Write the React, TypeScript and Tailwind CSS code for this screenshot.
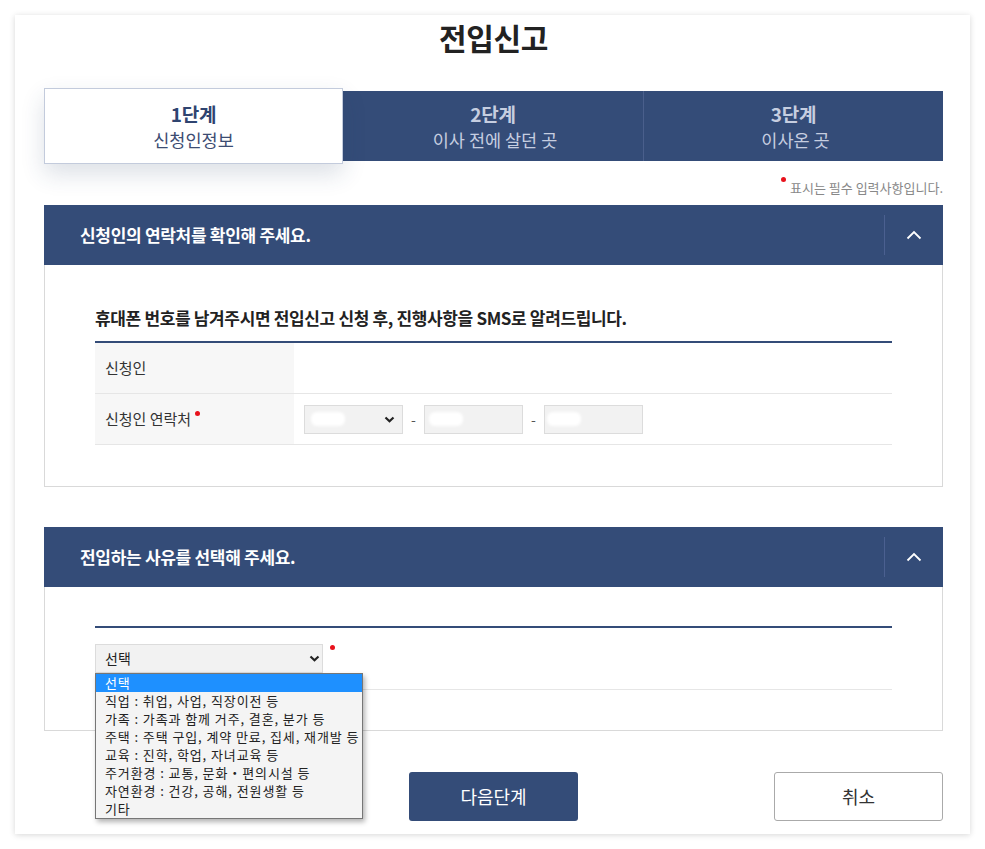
import React from 'react';

const FONT = '"Noto Sans CJK KR", "Noto Sans", sans-serif';

const steps = [
	{ no: '1단계', label: '신청인정보' },
	{ no: '2단계', label: '이사 전에 살던 곳' },
	{ no: '3단계', label: '이사온 곳' },
];

const reasons = [
	'선택',
	'직업 : 취업, 사업, 직장이전 등',
	'가족 : 가족과 함께 거주, 결혼, 분가 등',
	'주택 : 주택 구입, 계약 만료, 집세, 재개발 등',
	'교육 : 진학, 학업, 자녀교육 등',
	'주거환경 : 교통, 문화・편의시설 등',
	'자연환경 : 건강, 공해, 전원생활 등',
	'기타',
];

function RedDot() {
	return <span className="inline-block w-[5px] h-[5px] rounded-full bg-[#e8121c] align-top" />;
}

function ChevronDown() {
	return (
		<svg width="11" height="7" viewBox="0 0 11 7" fill="none">
			<polyline points="1.5,1.5 5.5,5.2 9.5,1.5" stroke="#222" strokeWidth="2.2" />
		</svg>
	);
}

function Blob({ w }: { w: number }) {
	return <span className="block h-[14px] rounded-[6px] bg-white blur-[1.5px]" style={{ width: w }} />;
}

function SectionHeader({ title }: { title: string }) {
	return (
		<div className="flex h-[60px] items-center bg-[#344c78]">
			<div className="flex-1 pl-[36px] text-[17px] font-bold tracking-[-0.3px] text-white">{title}</div>
			<div className="h-[40px] w-px bg-[#4b6090]" />
			<div className="flex w-[58px] items-center justify-center">
				<svg width="16" height="10" viewBox="0 0 16 10" fill="none">
					<polyline points="1.5,8.5 8,2 14.5,8.5" stroke="#fff" strokeWidth="1.8" />
				</svg>
			</div>
		</div>
	);
}

export default function App() {
	return (
		<div className="min-h-screen bg-white pt-[15px] pl-[15px]" style={{ fontFamily: FONT }}>
			<div className="w-[955px] bg-white px-[29px] pb-[13px] pr-[27px] shadow-[0_1px_6px_rgba(0,0,0,0.16)]">
				<h1 className="h-[44px] text-center text-[30px] font-bold leading-[44px] tracking-[-0.4px] text-[#222]">
					전입신고
				</h1>

				{/* 단계 */}
				<div className="mt-[32px] flex h-[70px] bg-[#344c78]">
					{steps.map((s, i) =>
						i === 0 ? (
							<div
								key={s.no}
								className="relative z-10 -my-[3px] flex w-[299px] flex-col items-center justify-center border border-[#c3cbdc] bg-white shadow-[0_10px_22px_rgba(40,60,100,0.16)]"
							>
								<div className="text-[19px] font-bold leading-[27px] tracking-[-0.2px] text-[#2f4470]">{s.no}</div>
								<div className="text-[17.5px] leading-[25px] text-[#3c4c72]">{s.label}</div>
							</div>
						) : (
							<div
								key={s.no}
								className={`flex w-[300px] flex-col items-center justify-center ${i === 2 ? 'border-l border-[#4a5f8c]' : ''}`}
							>
								<div className="text-[19px] font-bold leading-[27px] tracking-[-0.2px] text-[#c6cee0]">{s.no}</div>
								<div className="pl-[4px] text-[17.5px] leading-[25px] text-[#c6cee0]">{s.label}</div>
							</div>
						),
					)}
				</div>

				<div className="flex h-[44px] items-start justify-end pt-[19px] text-[13px] leading-[16px] text-[#888]">
					<span className="mr-[4px] mt-[-3px] inline-block h-[5px] w-[5px] rounded-full bg-[#e8121c]" />
					<span>표시는 필수 입력사항입니다.</span>
				</div>

				{/* 신청인 연락처 */}
				<SectionHeader title="신청인의 연락처를 확인해 주세요." />
				<div className="border border-t-0 border-[#d9d9d9] px-[50px] pb-[41px] pt-[41px]">
					<div className="border-b-2 border-[#344c78] pb-[11px] text-[17px] font-bold leading-[24px] tracking-[-0.35px] text-[#222]">
						휴대폰 번호를 남겨주시면 전입신고 신청 후, 진행사항을 SMS로 알려드립니다.
					</div>
					<div className="flex h-[51px] border-b border-[#e6e6e6]">
						<div className="flex w-[199px] items-center bg-[#f7f7f7] pl-[10px] text-[15px] text-[#333]">신청인</div>
						<div className="flex-1" />
					</div>
					<div className="flex h-[51px] border-b border-[#e6e6e6]">
						<div className="flex w-[199px] items-center bg-[#f7f7f7] pl-[10px] text-[15px] text-[#333]">
							<span>신청인 연락처</span>
							<span className="ml-[4px] -mt-[12px] inline-block h-[5px] w-[5px] rounded-full bg-[#e8121c]" />
						</div>
						<div className="flex flex-1 items-center pl-[10px] text-[14px] text-[#555]">
							<div className="flex h-[29px] w-[99px] items-center justify-between border border-[#dcdcdc] bg-[#f2f2f2] pl-[6px] pr-[7px]">
								<Blob w={34} />
								<ChevronDown />
							</div>
							<span className="w-[21px] text-center">-</span>
							<div className="flex h-[29px] w-[99px] items-center border border-[#dcdcdc] bg-[#f2f2f2] pl-[4px]">
								<Blob w={34} />
							</div>
							<span className="w-[21px] text-center">-</span>
							<div className="flex h-[29px] w-[99px] items-center border border-[#dcdcdc] bg-[#f2f2f2] pl-[2px]">
								<Blob w={34} />
							</div>
						</div>
					</div>
				</div>

				{/* 전입 사유 */}
				<div className="mt-[40px]">
					<SectionHeader title="전입하는 사유를 선택해 주세요." />
				</div>
				<div className="border border-t-0 border-[#d9d9d9] px-[50px] pb-[40px] pt-[39px]">
					<div className="border-t-2 border-[#344c78]" />
					<div className="flex h-[62px] items-start border-b border-[#e6e6e6] pt-[16px]">
						<div className="relative">
							<div className="flex h-[29px] w-[228px] items-center justify-between border border-[#dcdcdc] bg-[#f2f2f2] pl-[9px] pr-[2px] text-[14px] text-[#222]">
								<span>선택</span>
								<ChevronDown />
							</div>
							<ul className="absolute left-0 top-[29px] z-20 w-[268px] border border-[#767676] bg-[#f4f4f4] shadow-[2px_3px_5px_rgba(0,0,0,0.3)]">
								{reasons.map((r, i) => (
									<li
										key={r}
										className={`h-[18px] whitespace-nowrap pl-[9px] text-[13px] leading-[18px] tracking-[0.9px] ${i === 0 ? 'bg-[#1e90ff] text-white' : 'text-[#222]'}`}
									>
										{r}
									</li>
								))}
							</ul>
						</div>
						<span className="ml-[7px] mt-[1px]">
							<RedDot />
						</span>
					</div>
				</div>

				{/* 버튼 */}
				<div className="mt-[41px] grid grid-cols-[1fr_169px_1fr]">
					<div />
					<button className="h-[49px] rounded-[3px] bg-[#344c78] text-[18px] text-white">다음단계</button>
					<div className="flex justify-end">
						<button className="h-[49px] w-[169px] rounded-[3px] border border-[#aaa] bg-white text-[18px] text-[#333]">
							취소
						</button>
					</div>
				</div>
			</div>
		</div>
	);
}
